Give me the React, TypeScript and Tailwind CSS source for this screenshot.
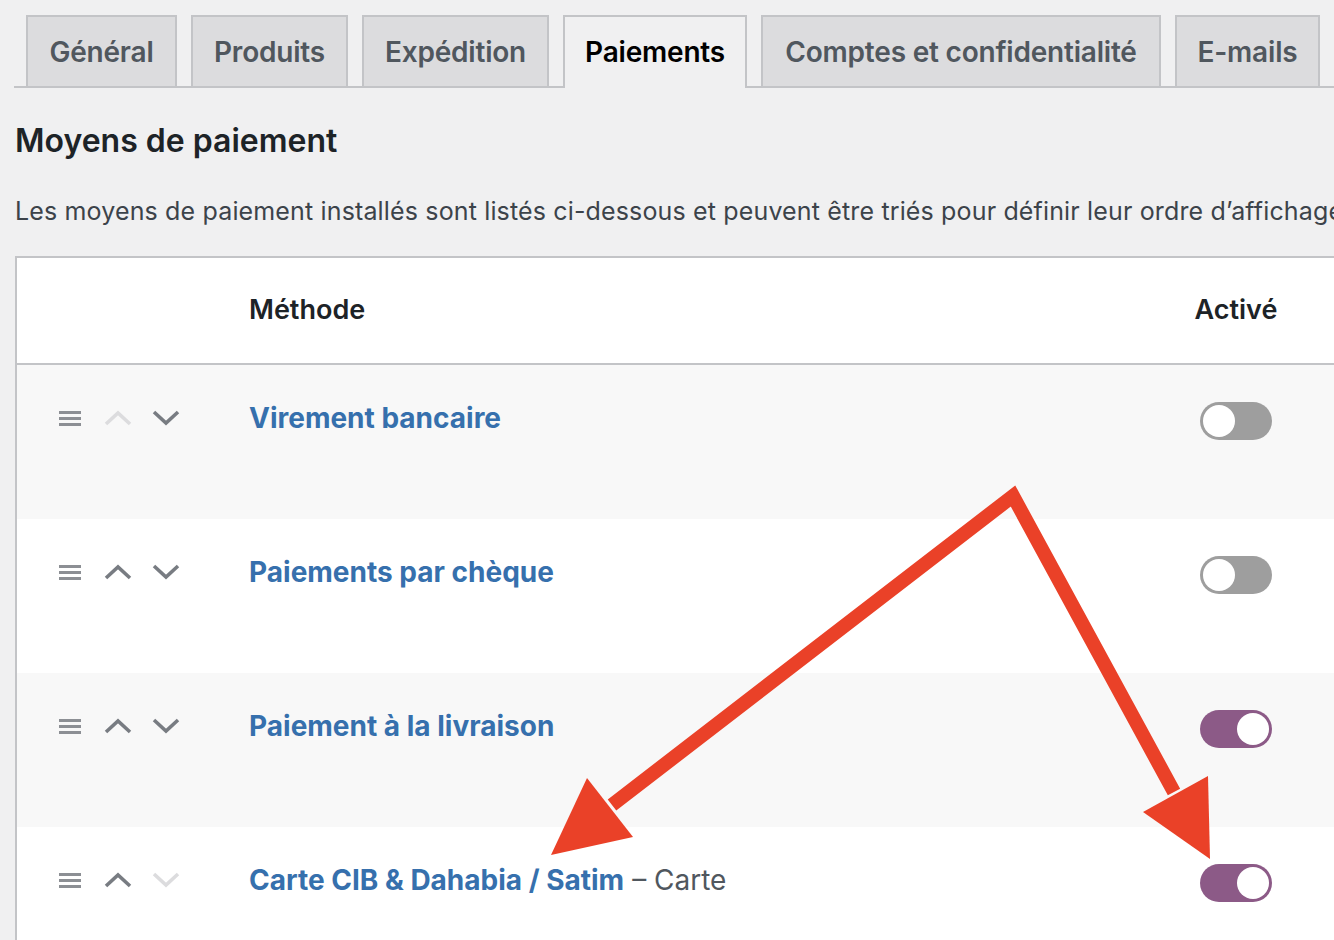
import React from "react";

const FONT = { fontFamily: "Inter, 'Noto Sans', 'Liberation Sans', sans-serif" };

function Hamburger() {
  return (
    <svg width="22" height="15" viewBox="0 0 22 15" className="block">
      <rect x="0" y="0" width="22" height="3" fill="#8c8f94" />
      <rect x="0" y="6" width="22" height="3" fill="#8c8f94" />
      <rect x="0" y="12" width="22" height="3" fill="#8c8f94" />
    </svg>
  );
}

function Chevron({ up, enabled }: { up: boolean; enabled: boolean }) {
  const color = enabled ? "#787c82" : "#dcdcde";
  return (
    <svg width="28" height="16" viewBox="0 0 28 16" className="block">
      <polyline
        points={up ? "2,14 14,3 26,14" : "2,2 14,13 26,2"}
        fill="none"
        stroke={color}
        strokeWidth="3.6"
        strokeLinejoin="miter"
      />
    </svg>
  );
}

function Toggle({ on }: { on: boolean }) {
  return (
    <div
      className={
        on
          ? "w-[72px] h-[38px] rounded-full bg-[#8c5a87] p-[3px] flex justify-end"
          : "w-[72px] h-[38px] rounded-full bg-[#9e9e9e] p-[3px] flex justify-start"
      }
    >
      <div className="w-[32px] h-[32px] rounded-full bg-white" />
    </div>
  );
}

type Row = { name: string; extra?: string; up: boolean; down: boolean; on: boolean; striped: boolean };

const rows: Row[] = [
  { name: "Virement bancaire", up: false, down: true, on: false, striped: true },
  { name: "Paiements par chèque", up: true, down: true, on: false, striped: false },
  { name: "Paiement à la livraison", up: true, down: true, on: true, striped: true },
  { name: "Carte CIB & Dahabia / Satim", extra: "Carte", up: true, down: false, on: true, striped: false },
];

const tabs = [
  { label: "Général", w: "w-[151px]" },
  { label: "Produits", w: "w-[157px]" },
  { label: "Expédition", w: "w-[187px]" },
  { label: "Paiements", w: "w-[184px]", active: true },
  { label: "Comptes et confidentialité", w: "w-[400px]" },
  { label: "E-mails", w: "w-[145px]" },
];

export default function App() {
  return (
    <div className="relative w-[1334px] h-[940px] overflow-hidden bg-[#f0f0f1]" style={FONT}>
      {/* Tabs */}
      <div className="pt-[15px] ml-[14px] pl-[12px] flex items-end gap-[14px] border-b-2 border-[#c3c4c7] w-[1400px]">
        {tabs.map((t) => (
          <div
            key={t.label}
            className={
              t.active
                ? `${t.w} h-[73px] -mb-[2px] shrink-0 flex items-center justify-center border-2 border-b-0 border-[#c3c4c7] bg-[#f0f0f1] text-black text-[28px] font-semibold tracking-[-0.2px] pb-[2px]`
                : `${t.w} h-[71px] shrink-0 flex items-center justify-center border-2 border-b-0 border-[#c3c4c7] bg-[#dcdcde] text-[#50575e] text-[28px] font-semibold tracking-[-0.2px]`
            }
          >
            {t.label}
          </div>
        ))}
      </div>

      {/* Heading */}
      <h2 className="ml-[15px] mt-[33px] text-[32px] leading-[40px] font-semibold text-[#1d2327]">Moyens de paiement</h2>
      <p className="ml-[15px] mt-[35px] text-[25px] leading-[30px] text-[#3c434a] whitespace-nowrap tracking-[0.15px]">
        Les moyens de paiement installés sont listés ci-dessous et peuvent être triés pour définir leur ordre d’affichage sur le site.
      </p>

      {/* Table */}
      <div className="ml-[15px] mt-[30px] w-[1500px] border-2 border-r-0 border-b-0 border-[#c3c4c7] bg-white">
        <div className="h-[107px] flex items-center border-b-2 border-[#c3c4c7]">
          <div className="w-[232px] shrink-0" />
          <div className="w-[931px] shrink-0 text-[27px] font-semibold text-[#1d2327]">Méthode</div>
          <div className="w-[112px] shrink-0 text-center text-[27px] font-semibold text-[#1d2327]">Activé</div>
          <div className="flex-1" />
        </div>
        {rows.map((r) => (
          <div key={r.name} className={`h-[154px] flex items-start ${r.striped ? "bg-[#f8f8f8]" : "bg-white"}`}>
            <div className="w-[232px] shrink-0 pt-[33px] h-[73px] flex items-center pl-[42px]">
              <Hamburger />
              <div className="ml-[23px]">
                <Chevron up enabled={r.up} />
              </div>
              <div className="ml-[20px]">
                <Chevron up={false} enabled={r.down} />
              </div>
            </div>
            <div className="w-[931px] shrink-0 pt-[33px] h-[73px] flex items-center text-[28px]">
              <span className="font-bold text-[#3670ad]">{r.name}</span>
              {r.extra && <span className="text-[#50575e] ml-[8px]">– {r.extra}</span>}
            </div>
            <div className="w-[112px] shrink-0 pt-[37px] flex justify-center">
              <Toggle on={r.on} />
            </div>
            <div className="flex-1" />
          </div>
        ))}
      </div>

      {/* Annotation arrows */}
      <svg className="absolute inset-0 pointer-events-none" width="1334" height="940" viewBox="0 0 1334 940">
        <polyline
          points="612,805 1013,496 1174,792"
          fill="none"
          stroke="#ea4128"
          strokeWidth="14"
          strokeLinejoin="miter"
          strokeMiterlimit="4"
        />
        <polygon points="587,778 633,837 551,855" fill="#ea4128" />
        <polygon points="1143,812 1208,776 1210,859" fill="#ea4128" />
      </svg>
    </div>
  );
}
